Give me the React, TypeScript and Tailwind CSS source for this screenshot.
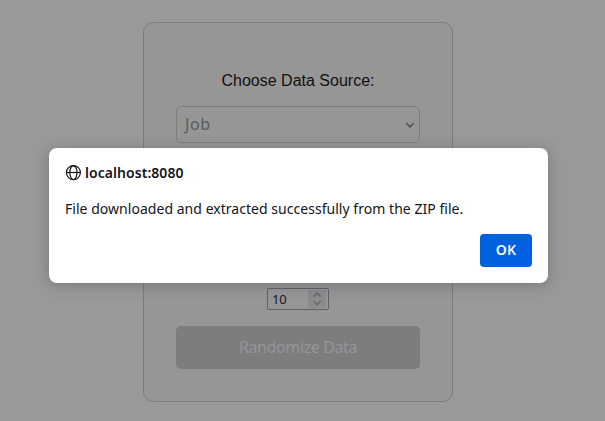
import React from 'react';

function Globe() {
  return (
    <svg className="size-4 shrink-0" viewBox="0 0 16 16" fill="none" stroke="#15141a" strokeWidth="1.2">
      <circle cx="8.4" cy="7.6" r="7" />
      <ellipse cx="8.4" cy="7.6" rx="3.6" ry="7" />
      <path d="M1.4 7.5h14" />
    </svg>
  );
}

function SourceForm() {
  return (
    <form className="flex h-[380px] w-[310px] flex-col items-center rounded-[10px] border border-[#7d7d7e] bg-[#969697] px-8">
      <label className="mt-[46px] h-6 text-base leading-6 whitespace-nowrap text-[#111113]">Choose Data Source:</label>
      <div className="mt-[13px] flex h-[37px] w-[244px] shrink-0 items-center justify-between rounded-[5px] border border-[#7d7d7e] pr-[3px] pl-2">
        <span className="pb-[2px] font-['Noto_Sans',sans-serif] text-base tracking-[0.6px] text-[#59595b]">Job</span>
        <svg className="h-3 w-3" viewBox="0 0 12 12" fill="none" stroke="#505053" strokeWidth="1.6">
          <path d="M2.3 4.2L6 7.9l3.7-3.7" />
        </svg>
      </div>
      <div className="mt-[145px] flex h-[22px] w-[62px] shrink-0 items-center justify-between rounded-[2px] border border-[#606068] pr-[2px] pl-1">
        <span className="font-['Noto_Sans',sans-serif] text-[13px] leading-4 tracking-[-0.3px] text-[#17171a]">10</span>
        <svg className="h-[18px] w-[18px] bg-[#8b8b8e]" viewBox="0 0 18 18" fill="none" stroke="#66666a" strokeWidth="1.5">
          <path d="M5.5 6.5L9 3l3.5 3.5M5.5 11L9 14.5l3.5-3.5" />
        </svg>
      </div>
      <button type="button" className="mt-4 h-[43px] w-[244px] shrink-0 rounded-[5px] bg-[#7d7d7e] pb-[2px] font-['Noto_Sans',sans-serif] text-base tracking-[-0.38px] text-[#949498]">
        Randomize Data
      </button>
    </form>
  );
}

function AlertDialog() {
  return (
    <div role="alertdialog" className="absolute top-[148px] left-[49px] flex h-[135px] w-[499px] flex-col rounded-lg bg-white px-4 pt-4 pb-4 font-['Noto_Sans',sans-serif] text-[#15141a] shadow-[0_2px_14px_rgba(58,57,68,0.35)]">
      <div className="flex h-[18px] items-center gap-1">
        <Globe />
        <span className="pb-[2px] text-[14px] font-semibold tracking-[0.05px] whitespace-nowrap">localhost:8080</span>
      </div>
      <p className="mt-[17px] h-5 text-[14px] leading-5 tracking-[0.035px] whitespace-nowrap">File downloaded and extracted successfully from the ZIP file.</p>
      <button type="button" className="mt-auto h-[33px] w-[52px] self-end rounded bg-[#0061e0] pb-[2px] text-[14px] font-semibold tracking-[0.2px] text-[#fbfbfe]">OK</button>
    </div>
  );
}

export default function App() {
  return (
    <main className="relative h-[421px] w-[605px] overflow-hidden bg-[#99999a] pt-[22px] pl-[143px] font-['Liberation_Sans',sans-serif]">
      <SourceForm />
      <AlertDialog />
    </main>
  );
}
